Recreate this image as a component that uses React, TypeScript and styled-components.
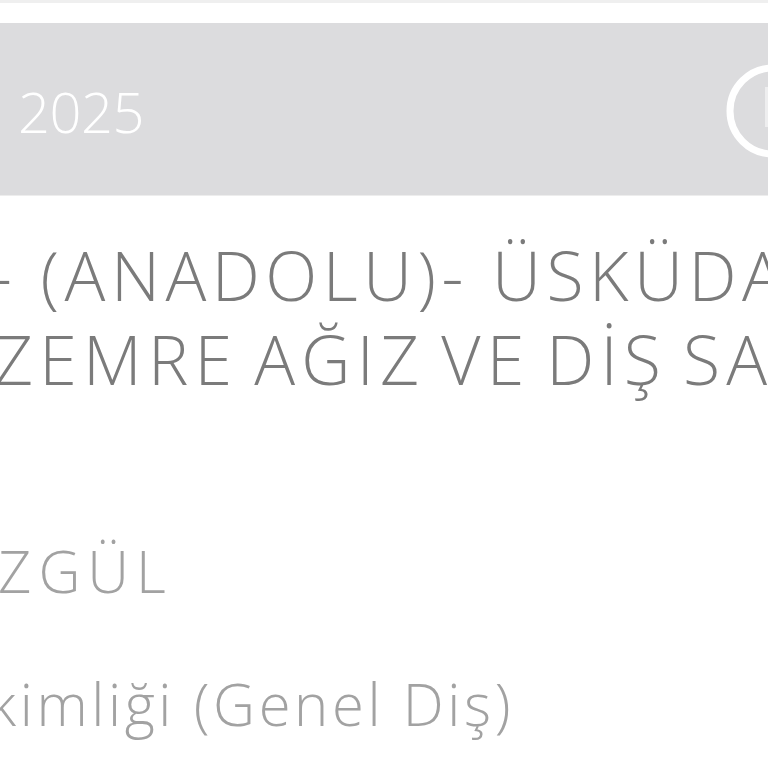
import React from "react";
import styled, { createGlobalStyle } from "styled-components";

const GlobalStyle = createGlobalStyle`
  html, body {
    margin: 0;
    padding: 0;
    background: #ffffff;
    overflow: hidden;
  }
  body {
    font-family: "Open Sans", "Liberation Sans", sans-serif;
  }
`;

const Page = styled.div`
  width: 768px;
  height: 768px;
  overflow: hidden;
  background: #ffffff;
`;

const TopStrip = styled.div`
  height: 3px;
  background: #efefef;
`;

const TopGap = styled.div`
  height: 20px;
  background: #ffffff;
`;

const Header = styled.div`
  height: 172px;
  background: #dcdcde;
  display: flex;
  align-items: center;
  justify-content: space-between;
  padding-left: 18px;
  border-bottom: 1px solid #ededed;
`;

const Year = styled.span`
  color: #ffffff;
  font-size: 56px;
  font-weight: 300;
  line-height: 1;
  margin-top: 4px;
  letter-spacing: -0.5px;
`;

const IconBox = styled.div`
  width: 94px;
  height: 94px;
  margin-right: -52px;
  margin-top: 4px;
  flex-shrink: 0;
`;

const Content = styled.div`
  display: flex;
  flex-direction: column;
`;

const Title = styled.div`
  margin-top: 37px;
  font-size: 68px;
  line-height: 84px;
  font-weight: 300;
  color: #7b7b7b;
`;

const Line = styled.div<{ $indent?: number; $spacing: number; $word?: number }>`
  white-space: nowrap;
  overflow: hidden;
  margin-left: ${(p) => p.$indent ?? 0}px;
  letter-spacing: ${(p) => p.$spacing}px;
  word-spacing: ${(p) => p.$word ?? 0}px;
`;

const Detail = styled.div<{ $gap: number; $indent?: number; $spacing: number }>`
  margin-top: ${(p) => p.$gap}px;
  margin-left: ${(p) => p.$indent ?? 0}px;
  letter-spacing: ${(p) => p.$spacing}px;
  font-size: 58px;
  line-height: 70px;
  font-weight: 300;
  color: #a2a2a2;
  white-space: nowrap;
`;

function InfoIcon() {
  return (
    <svg width="94" height="94" viewBox="0 0 94 94" fill="none">
      <circle cx="47" cy="47" r="43" stroke="#ffffff" strokeWidth="7" />
      <line x1="40.5" y1="23" x2="40.5" y2="63" stroke="#ffffff" strokeWidth="3" opacity="0.5" />
    </svg>
  );
}

export default function App() {
  return (
    <Page>
      <GlobalStyle />
      <TopStrip />
      <TopGap />
      <Header>
        <Year>2025</Year>
        <IconBox>
          <InfoIcon />
        </IconBox>
      </Header>
      <Content>
        <Title>
          <Line $indent={-10} $spacing={5.5}>- (ANADOLU)- ÜSKÜDAR</Line>
          <Line $indent={-6} $spacing={6.2} $word={-8}>ZEMRE AĞIZ VE DİŞ SAĞLIĞI</Line>
        </Title>
        <Detail $gap={135} $indent={-2} $spacing={7}>ZGÜL</Detail>
        <Detail $gap={63} $indent={-12} $spacing={3.6}>kimliği (Genel Diş)</Detail>
      </Content>
    </Page>
  );
}
